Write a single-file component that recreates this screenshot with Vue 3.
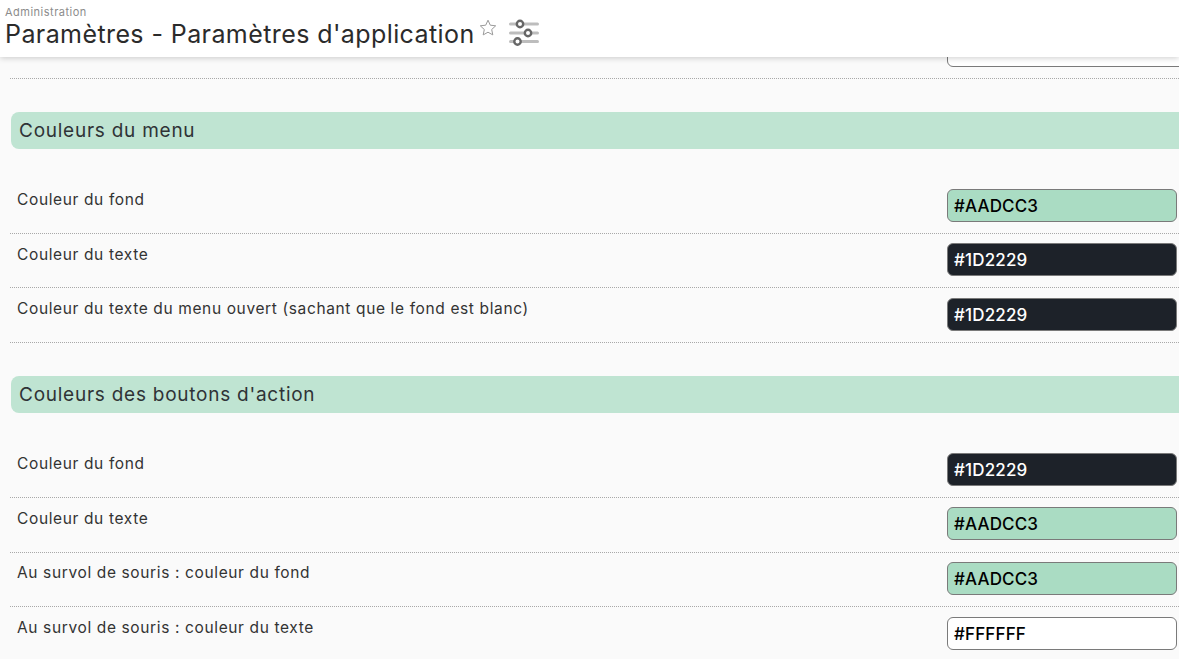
<script setup>
const sections = [
  {
    title: 'Couleurs du menu',
    rows: [
      { label: 'Couleur du fond', value: '#AADCC3', tone: 'mint' },
      { label: 'Couleur du texte', value: '#1D2229', tone: 'dark' },
      { label: 'Couleur du texte du menu ouvert (sachant que le fond est blanc)', value: '#1D2229', tone: 'dark' },
    ],
  },
  {
    title: "Couleurs des boutons d'action",
    rows: [
      { label: 'Couleur du fond', value: '#1D2229', tone: 'dark' },
      { label: 'Couleur du texte', value: '#AADCC3', tone: 'mint' },
      { label: 'Au survol de souris : couleur du fond', value: '#AADCC3', tone: 'mint' },
      { label: 'Au survol de souris : couleur du texte', value: '#FFFFFF', tone: 'white' },
    ],
  },
]
</script>

<template>
  <div class="page">
    <header class="topbar">
      <div class="crumb">Administration</div>
      <div class="title-line">
        <h1 class="title">Paramètres - Paramètres d'application</h1>
        <svg class="star" viewBox="0 0 18 17" width="18" height="17" aria-hidden="true">
          <path d="M9 1.2l2.3 5 5.4.6-4 3.7 1.1 5.4L9 13.2l-4.8 2.7 1.1-5.4-4-3.7 5.4-.6z" fill="none" stroke="#9a9a9a" stroke-width="1" stroke-linejoin="round" />
        </svg>
        <svg class="sliders" viewBox="0 0 30 28" width="30" height="28" aria-hidden="true">
          <g stroke="#bdbdbd" stroke-width="3" stroke-linecap="round">
            <line x1="1.5" y1="5" x2="28.5" y2="5" />
            <line x1="1.5" y1="14" x2="28.5" y2="14" />
            <line x1="1.5" y1="22.5" x2="28.5" y2="22.5" />
          </g>
          <g fill="#fff" stroke="#666" stroke-width="2.4">
            <circle cx="11" cy="5" r="3.2" />
            <circle cx="19" cy="14" r="3.2" />
            <circle cx="8.5" cy="22.5" r="3.2" />
          </g>
        </svg>
      </div>
    </header>

    <main class="content">
      <div class="row first-row">
        <span></span>
        <div class="swatch white cut"></div>
      </div>

      <section v-for="section in sections" :key="section.title" class="section">
        <h2 class="section-title">{{ section.title }}</h2>
        <div class="rows">
          <div v-for="row in section.rows" :key="row.label" class="row">
            <label class="label">{{ row.label }}</label>
            <div class="swatch" :class="row.tone">{{ row.value }}</div>
          </div>
        </div>
      </section>
    </main>
  </div>
</template>

<style scoped>
.page {
  height: 659px;
  overflow: hidden;
  background: #fafafa;
  color: #2b2b2b;
  font-family: Inter, "Open Sans", sans-serif;
}
.topbar {
  position: relative;
  z-index: 2;
  height: 57px;
  box-sizing: border-box;
  padding: 6px 5px 0;
  background: #fff;
  box-shadow: 0 1px 6px rgba(0, 0, 0, 0.2);
}
.crumb {
  font-size: 11px;
  line-height: 13px;
  letter-spacing: 0.5px;
  color: #8c8c8c;
}
.title-line {
  display: flex;
  align-items: flex-start;
}
.title {
  margin: 0;
  font-size: 25px;
  line-height: 30px;
  font-weight: 400;
  letter-spacing: 0.41px;
  color: #2b2b2b;
  white-space: nowrap;
}
.star {
  margin: 0 0 0 4px;
}
.sliders {
  margin: 0 0 0 12px;
}
.content {
  margin-top: -10px;
}
.row {
  display: grid;
  grid-template-columns: 1fr 232px;
  box-sizing: border-box;
  height: 55.1px;
  margin-bottom: -0.5px;
  margin-left: 10px;
  padding-top: 10px;
  border-bottom: 1px dotted #a8a8a8;
}
.first-row {
  height: 32px;
  margin-bottom: -0.7px;
  padding-top: 0;
}
.first-row .swatch {
  height: 20px;
}
.section {
  margin-top: 33.4px;
}
.section-title {
  margin: 0 0 30px 11px;
  height: 37px;
  padding-left: 8px;
  border-radius: 8px 0 0 8px;
  background: #bfe4d2;
  font-size: 19px;
  line-height: 37px;
  font-weight: 400;
  letter-spacing: 0.75px;
  color: #2f3336;
}
.label {
  padding: 1.4px 0 0 7px;
  font-size: 15.5px;
  line-height: 20px;
  letter-spacing: 0.63px;
  color: #333;
}
.swatch {
  box-sizing: border-box;
  width: 230px;
  height: 33px;
  padding-left: 6px;
  border: 1px solid #7a7a7a;
  border-radius: 6px;
  font-size: 17px;
  line-height: 32px;
  font-weight: 500;
  letter-spacing: 0.15px;
}
.cut {
  width: 240px;
}
.mint {
  background: #aadcc3;
  color: #000;
}
.dark {
  background: #1d2229;
  color: #fff;
}
.white {
  background: #fff;
  color: #000;
}
</style>

<style>
html,
body {
  margin: 0;
  overflow: hidden;
}
</style>
